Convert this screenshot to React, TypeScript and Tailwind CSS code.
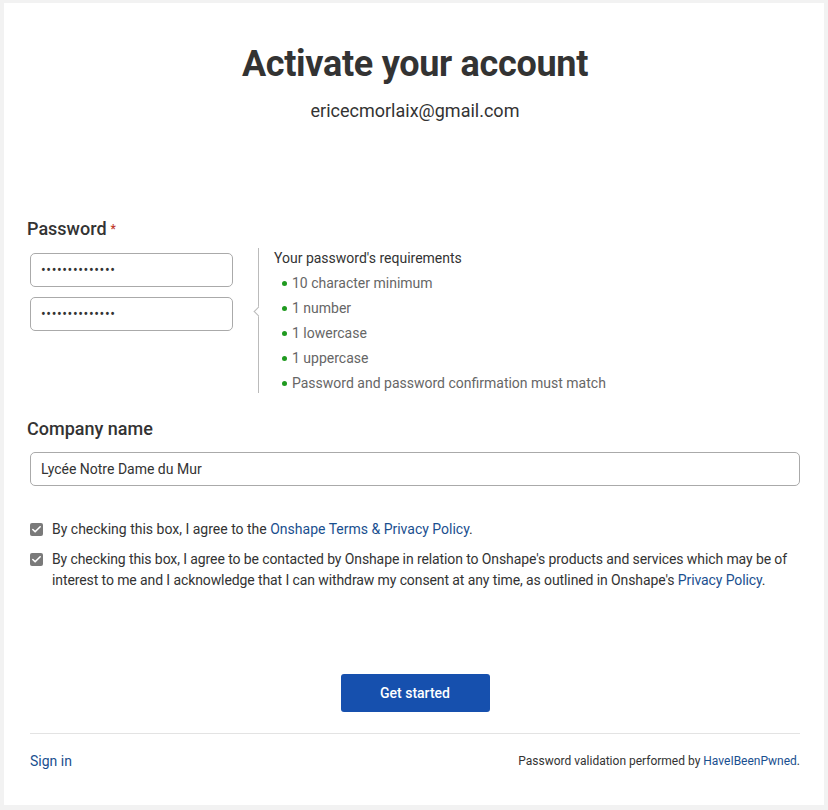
import { Check } from 'lucide-react'

const requirements = [
  '10 character minimum',
  '1 number',
  '1 lowercase',
  '1 uppercase',
  'Password and password confirmation must match',
]

function Box() {
  return (
    <span className="mt-[4px] flex h-[13px] w-[13px] shrink-0 items-center justify-center rounded-[2px] bg-[#7a7a7a]">
      <Check className="h-[11px] w-[11px] text-white" strokeWidth={3.5} />
    </span>
  )
}

export default function App() {
  return (
    <div className="min-h-screen bg-[#f2f2f2] px-[4px] pt-[3px] pb-[5px] font-['Roboto',sans-serif] text-[#333]">
      <div className="flex h-[802px] flex-col bg-white pl-[26px] pr-[24px]">
        <h1 className="mt-[40px] text-center text-[36px] font-bold leading-[42px] tracking-[-0.3px]">
          Activate your account
        </h1>
        <p className="mt-[14px] text-center text-[18px] leading-[24px]">ericecmorlaix@gmail.com</p>

        <label className="-ml-[3px] mt-[94px] text-[18px] font-medium leading-[24px]">
          Password<span className="ml-[4px] align-top text-[12px] text-[#c0392b]">*</span>
        </label>

        <div className="mt-[7px] flex">
          <div className="mt-[5px] flex w-[203px] flex-col gap-[10px]">
            <div className="flex h-[34px] items-center rounded-[5px] border border-[#aaa] px-[10px] text-[14px] tracking-[0.6px]">
              ••••••••••••••
            </div>
            <div className="flex h-[34px] items-center rounded-[5px] border border-[#aaa] px-[10px] text-[14px] tracking-[0.6px]">
              ••••••••••••••
            </div>
          </div>
          <div className="relative ml-[25px] border-l border-[#bbb] pl-[15px]">
            <span className="absolute left-[-4px] top-[60px] h-[7px] w-[7px] rotate-45 border-b border-l border-[#bbb] bg-white" />
            <p className="text-[14px] leading-[20px]">Your password's requirements</p>
            <ul className="mt-[5px] flex flex-col gap-[5px] pl-[8px]">
              {requirements.map((r) => (
                <li key={r} className="flex items-center gap-[5px] text-[14px] leading-[20px] text-[#666]">
                  <span className="h-[5px] w-[5px] rounded-full bg-[#1f9a1f]" />
                  {r}
                </li>
              ))}
            </ul>
          </div>
        </div>

        <label className="-ml-[3px] mt-[24px] text-[18px] font-medium leading-[24px]">Company name</label>
        <div className="mt-[11px] flex h-[34px] items-center rounded-[5px] border border-[#aaa] px-[10px] text-[14px]">
          Lycée Notre Dame du Mur
        </div>

        <div className="mt-[33px] flex gap-[9px] text-[14px] leading-[21px]">
          <Box />
          <p>
            By checking this box, I agree to the <a className="text-[#1a4f8f]">Onshape Terms &amp; Privacy Policy</a>.
          </p>
        </div>
        <div className="mt-[9px] flex gap-[9px] text-[14px] leading-[21px] tracking-[-0.1px]">
          <Box />
          <p className="pr-[8px]">
            By checking this box, I agree to be contacted by Onshape in relation to Onshape's products and services which may be of
            interest to me and I acknowledge that I can withdraw my consent at any time, as outlined in Onshape's{' '}
            <a className="text-[#1a4f8f]">Privacy Policy</a>.
          </p>
        </div>

        <div className="mt-[83px] flex justify-center">
          <button className="h-[38px] w-[149px] rounded-[3px] bg-[#1650ae] text-[14px] font-medium text-white">
            Get started
          </button>
        </div>

        <hr className="mt-[21px] border-[#e3e3e3]" />

        <div className="mt-[19px] flex items-center justify-between">
          <a className="text-[14px] leading-[16px] text-[#1a4f8f]">Sign in</a>
          <p className="text-[12px] leading-[16px]">
            Password validation performed by <a className="text-[#1a4f8f]">HaveIBeenPwned</a>.
          </p>
        </div>
      </div>
    </div>
  )
}
